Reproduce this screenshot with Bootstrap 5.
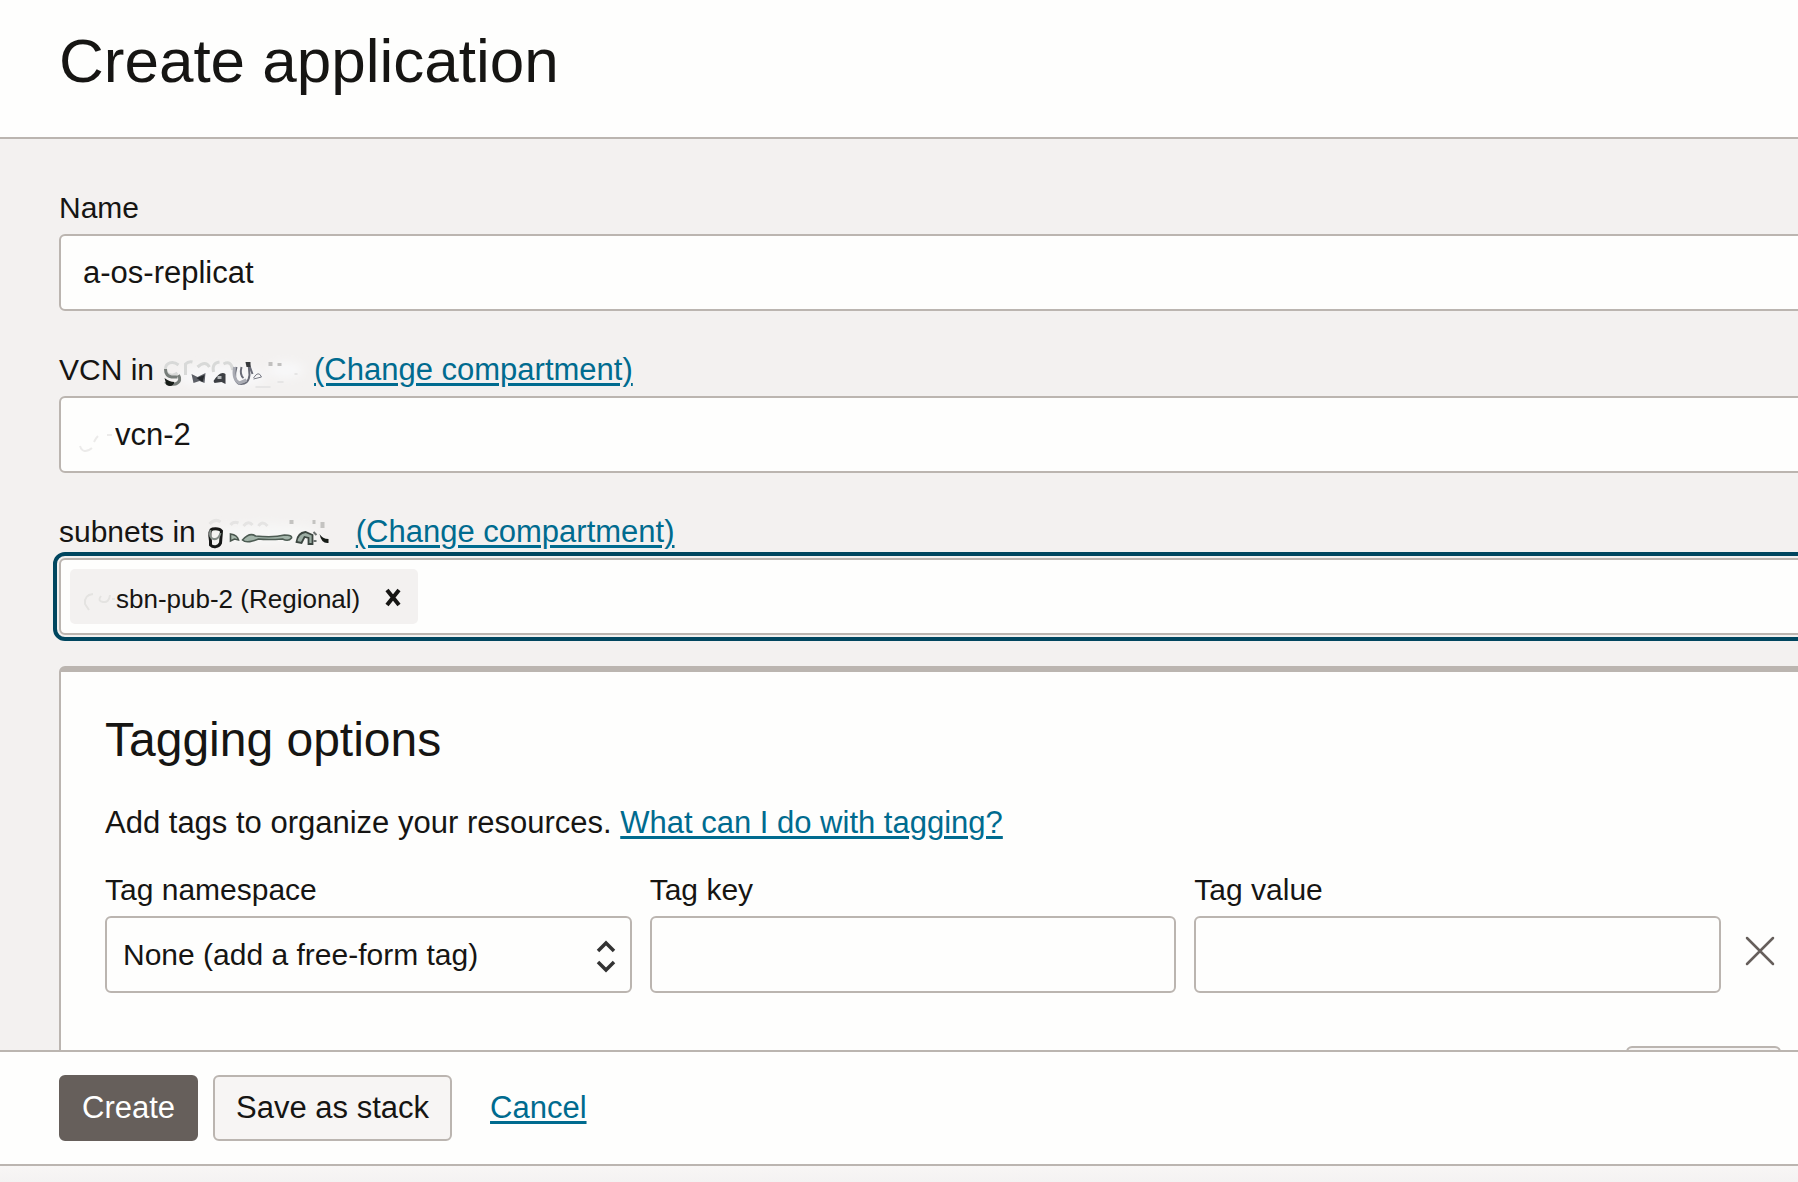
<!DOCTYPE html>
<html lang="en">
<head>
<meta charset="utf-8">
<meta name="viewport" content="width=device-width, initial-scale=1">
<title>Create application</title>
<link href="https://cdn.jsdelivr.net/npm/bootstrap@5.3.0/dist/css/bootstrap.min.css" rel="stylesheet">
<style>
:root { --ink: #161513; --paper: #fefefd; --sand: #f3f1f0; --line: #bbb5b0; --link: #006b8f; --ring: #00465f; }
body { font-family: "Liberation Sans", Arial, sans-serif; font-size: 30px; line-height: 40px; color: var(--ink); background: var(--sand); }
a { color: var(--link); font-size: 31px; text-decoration-thickness: 3px; text-underline-offset: 3px; }
.page-head { background: var(--paper); border-bottom: 2px solid var(--line); padding: 25px 59px 40px; }
.page-head h1 { font-size: 62px; line-height: 72px; font-weight: 400; }
.form-area { min-height: 0; padding: 49px 0 0 59px; }
/* the form runs on past the right edge of the drawer */
.form-body { margin-right: -25px; }
.field-group { margin-bottom: 40px; }
.caption-row { margin-bottom: 6px; white-space: nowrap; }
.link-caption { margin-top: -1px; }
.smudge { width: 151px; height: 40px; margin-left: 9px; flex: none; }
.form-control, .form-select { height: 77px; border: 2px solid var(--line); border-radius: 6px; background-color: var(--paper); color: var(--ink); font-size: 31px; line-height: 40px; padding: 0 22px; }
.form-select { background-image: none; font-size: 30px; padding: 0 56px 0 16px; }
.vcn-input { padding-left: 54px; }
.smudge-over { position: absolute; left: 18px; top: 26px; width: 38px; height: 34px; pointer-events: none; }
.select-arrows { position: absolute; right: 16px; top: 23px; width: 20px; height: 34px; pointer-events: none; }
.chip-box { height: 77px; padding: 0 9px; outline: 4px solid var(--ring); outline-offset: 2px; }
.chip-item { height: 55px; background: var(--sand); border-radius: 5px; padding: 5px 12px 0 12px; font-size: 26px; line-height: 40px; }
.chip-item svg { flex: none; }
.chip-smudge { width: 34px; height: 34px; }
.chip-close { width: 26px; height: 26px; margin-left: 20px; }
.chip-entry { border: 0; background: transparent; outline: 0; min-width: 0; }
.tag-panel { margin-top: -9px; background: var(--paper); border: 2px solid var(--line); border-top-width: 6px; border-radius: 6px; padding: 40px 40px 60px 44px; }
.tag-panel h2 { font-size: 48px; line-height: 56px; font-weight: 400; margin-bottom: 35px; }
.tag-panel p { font-size: 31px; margin-bottom: 27px; }
.tag-row { gap: 18px; margin-bottom: 53px; }
.tag-close { width: 42px; height: 77px; padding-bottom: 7px; }
.btn { height: 66px; font-size: 31px; line-height: 40px; border-radius: 6px; border: 2px solid var(--line); padding: 0 21px; background: #f7f5f4; color: var(--ink); }
.btn-create { background: #665f5b; border-color: #665f5b; color: #fff; }
.btn-other { width: 155px; padding: 0; }
.page-foot { background: var(--paper); border-top: 2px solid var(--line); border-bottom: 2px solid var(--line); padding: 23px 59px; gap: 15px; }
.page-foot a { margin-left: 23px; }
.under-strip { height: 16px; background: linear-gradient(#f8f6f5, #f4f2f2); }
</style>
</head>
<body>
<div class="d-flex flex-column vh-100 overflow-hidden">
  <header class="page-head"><h1 class="mb-0">Create application</h1></header>

  <main class="form-area flex-grow-1 overflow-hidden">
    <form class="form-body" id="app-form">
      <div class="field-group">
        <div class="caption-row"><label for="app-name" class="d-block">Name</label></div>
        <input class="form-control" id="app-name" type="text" value="a-os-replicat">
      </div>

      <div class="field-group">
        <div class="caption-row link-caption d-flex">
          <label for="vcn">VCN in</label>
          <svg class="smudge" viewBox="0 0 150 40" aria-hidden="true">
            <defs><filter id="soft"><feGaussianBlur stdDeviation="0.7"/></filter><filter id="haze" x="-50%" y="-50%" width="200%" height="200%"><feGaussianBlur stdDeviation="5"/></filter></defs>
            <g filter="url(#haze)" fill="#f8f8f9"><ellipse cx="58" cy="27" rx="44" ry="11"/><ellipse cx="122" cy="20" rx="18" ry="8"/></g>
            <g filter="url(#soft)" fill="none">
              <path d="M15 15C9 10 2 13 2 19s7 8 12 4M22 25v-11q3-3 7-2M34 17q8-7 12 0M50 22q-2-9 6-10M60 14q8-4 9 6" stroke="#d8d9d8" stroke-width="3"/>
              <path d="M2 19q0 7 6 8h6M2 32q2 3 10 2c5-2 5-6 3-9" stroke="#777d79" stroke-width="3"/>
              <path d="M1 28q5 4 10 4-2 6-8 3z" fill="#171a18"/>
              <path d="M28 24l6 3 8-4-1 10-5-2-6 2z" fill="#5d6067"/><path d="M33 28l8-3-2 7z" fill="#282a2e"/>
              <path d="M50 31q7-11 12-7v10l-4-2-7 1z" fill="#3c3f44"/><path d="M54 26h4v3h-4z" fill="#b5b8bb"/>
              <path d="M73 17q-4 14 3 17 9 1 10-9l-1-12 4 11M78 17q-2 8 2 11" stroke="#6a6c78" stroke-width="2"/>
              <path d="M71 17q-2 13 5 16l7-3" stroke="#a9abb3" stroke-width="3"/>
              <path d="M82 12h5v5h-4z" fill="#36383a"/><path d="M90 28q5-8 8-1l-8 2" stroke="#777983" stroke-width="1"/>
              <path d="M105 12h4v4h-4zM114 13h4v3h-4z" fill="#c1c0bf"/><path d="M92 37h15M114 32h6M131 24h3" stroke="#e6e5e5" stroke-width="2"/>
            </g>
          </svg>
          <a href="#">(Change compartment)</a>
        </div>
        <div class="position-relative">
          <input class="form-control vcn-input" id="vcn" type="text" value="vcn-2">
          <svg class="smudge-over" viewBox="0 0 38 34" aria-hidden="true"><g filter="url(#soft)" fill="none" stroke="#ecebea" stroke-width="2"><path d="M3 24q3 9 12 2M17 20q2-4 4-6M30 13h5" /></g></svg>
        </div>
      </div>

      <div class="field-group">
        <div class="caption-row link-caption d-flex">
          <label for="subnets">subnets in</label>
          <svg class="smudge" viewBox="0 2 150 40" aria-hidden="true">
            <ellipse cx="60" cy="24" rx="54" ry="10" fill="#f7f7f6" filter="url(#haze)"/>
            <g filter="url(#soft)" fill="none">
              <path d="M4 14q6-6 11-2M25 15q3-4 8-2M38 16q5-6 9-1M53 16q4-6 9 0" stroke="#e5e4e3" stroke-width="3"/>
              <path d="M5 31q-2-11 2-12 7-1 9 2l-1 12c-2 4-7 5-10 2z" stroke="#151715" stroke-width="3"/>
              <path d="M5 20q-2 8 3 9t7-6" stroke="#858d88" stroke-width="2"/>
              <path d="M25 31v-7q7 1 8 6l-4-1z" fill="#a9baae" stroke="#4a574e" stroke-width="1.6"/>
              <path d="M37 30q7-8 13-4 18 2 29-1 8 0 7 3-3 4-9 1-15 1-24 0-12 5-16 1z" fill="#a3b5aa" stroke="#4d5b53" stroke-width="1.6"/>
              <path d="M91 32q1-9 9-10l7 3v9h-4v-6l-4-1-3 6z" fill="#9cada3" stroke="#3b453f" stroke-width="1.8"/>
              <path d="M108 22l3 3M108 31h3" stroke="#6a6f6e" stroke-width="2"/><path d="M114 24q3 5 9 5v4q-7 1-9-9z" fill="#171a18"/>
              <path d="M84 10h4v4h-4zM107 10h3v4h-3zM115 12h4v6h-4z" fill="#c4c3c1"/>
            </g>
          </svg>
          <a href="#">(Change compartment)</a>
        </div>
        <div class="form-control chip-box d-flex align-items-center">
          <span class="chip-item d-flex align-items-center">
            <svg class="chip-smudge" viewBox="0 0 34 34" aria-hidden="true"><g filter="url(#soft)" fill="none" stroke="#e4e3e1" stroke-width="2"><path d="M11 12q-9 1-8 10l4 6M19 14q-4 5 2 6t7-7M30 17h3"/></g></svg>
            <span class="text-nowrap">sbn-pub-2 (Regional)</span>
            <button class="chip-close border-0 bg-transparent p-0 d-flex align-items-center justify-content-center" type="button" aria-label="Remove">
              <svg width="18" height="22" viewBox="0 0 18 22"><path d="M3 2l12 15M15 2L3 17" stroke="#161513" stroke-width="4"/></svg>
            </button>
          </span>
          <input class="chip-entry flex-grow-1" id="subnets" type="text">
        </div>
      </div>

      <section class="tag-panel">
        <h2>Tagging options</h2>
        <p>Add tags to organize your resources. <a href="#">What can I do with tagging?</a></p>
        <div class="tag-row d-flex align-items-end">
          <div class="flex-fill w-100">
            <div class="caption-row"><label class="d-block" for="tag-ns">Tag namespace</label></div>
            <div class="position-relative">
              <select class="form-select" id="tag-ns"><option>None (add a free-form tag)</option></select>
              <svg class="select-arrows" viewBox="0 0 20 34" fill="none" stroke="#333" stroke-width="3.5" aria-hidden="true"><path d="M2 12l8-8 8 8M2 23l8 8 8-8"/></svg>
            </div>
          </div>
          <div class="flex-fill w-100">
            <div class="caption-row"><label class="d-block" for="tag-key">Tag key</label></div>
            <input class="form-control" id="tag-key" type="text">
          </div>
          <div class="flex-fill w-100">
            <div class="caption-row"><label class="d-block" for="tag-value">Tag value</label></div>
            <input class="form-control" id="tag-value" type="text">
          </div>
          <button class="tag-close border-0 bg-transparent px-0 pt-0 flex-shrink-0 d-flex align-items-center justify-content-center" type="button" aria-label="Remove tag">
            <svg width="30" height="30" viewBox="0 0 30 30"><path d="M2 2l26 26M28 2L2 28" stroke="#665f5b" stroke-width="2.5" stroke-linecap="round"/></svg>
          </button>
        </div>
        <div class="d-flex justify-content-end"><button class="btn btn-other" type="button" aria-label="Add another tag"></button></div>
      </section>
    </form>
  </main>

  <footer class="page-foot d-flex align-items-center">
    <button class="btn btn-create" type="submit" form="app-form">Create</button>
    <button class="btn" type="button">Save as stack</button>
    <a href="#">Cancel</a>
  </footer>
  <div class="under-strip flex-shrink-0"></div>
</div>
<script src="https://cdn.jsdelivr.net/npm/bootstrap@5.3.0/dist/js/bootstrap.bundle.min.js"></script>
</body>
</html>
